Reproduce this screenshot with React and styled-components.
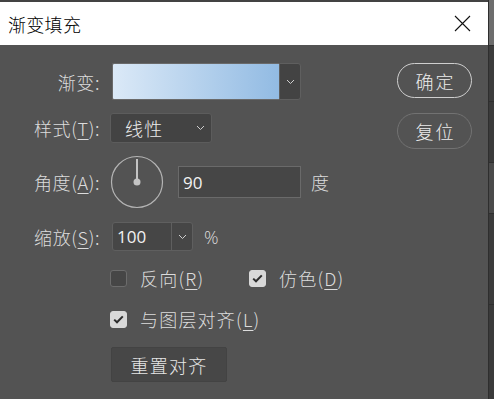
import React from "react";
import styled, { createGlobalStyle } from "styled-components";

const GlobalStyle = createGlobalStyle`
  html, body {
    margin: 0;
    padding: 0;
    background: #3b3b3b;
  }
  body {
    font-family: "Noto Sans CJK SC", "Noto Sans", sans-serif;
  }
`;

const Page = styled.div`
  display: flex;
  width: 494px;
  height: 399px;
  overflow: hidden;
`;

const Dialog = styled.div`
  width: 488px;
  display: flex;
  flex-direction: column;
  background: #535353;
  border-top: 2px solid #434343;
`;

const SideStrip = styled.div`
  flex: 1;
  display: flex;
  flex-direction: column;
  background: #3a3a3a;
  border-left: 1px solid #2e2e2e;
`;

const StripPart = styled.div`
  height: ${(p) => p.$h}px;
  background: ${(p) => p.$bg};
  border-bottom: 1px solid #2f2f2f;
`;

const TitleBar = styled.div`
  height: 43px;
  background: #fff;
  display: flex;
  align-items: center;
  justify-content: space-between;
  padding: 0 17px 0 8px;
`;

const Title = styled.span`
  font-size: 18px;
  font-weight: 300;
  color: #000;
  letter-spacing: 0.3px;
`;

const Body = styled.div`
  flex: 1;
  display: flex;
  padding-top: 18px;
`;

const Form = styled.div`
  display: flex;
  flex-direction: column;
  color: #dcdcdc;
  font-size: 18px;
  font-weight: 300;
  letter-spacing: 1.2px;
`;

const Row = styled.div`
  display: flex;
  align-items: center;
  height: ${(p) => p.$h}px;
  margin-top: ${(p) => p.$mt || 0}px;
  padding-left: ${(p) => p.$pl || 0}px;
`;

const Label = styled.div`
  width: 100px;
  text-align: right;
  margin-right: ${(p) => p.$gap ?? 12}px;
  white-space: nowrap;
  letter-spacing: 0.6px;
`;

const Key = styled.span`
  text-decoration: underline;
  text-underline-offset: 3px;
  text-decoration-thickness: 1px;
`;

const Swatch = styled.div`
  width: 167px;
  height: 37px;
  box-sizing: border-box;
  border: 1px solid #6a6a6a;
  border-right: none;
  border-radius: 2px 0 0 2px;
  background: linear-gradient(to right, #dbe9f7, #92bbe3);
`;

const DropButton = styled.div`
  width: 22px;
  height: 37px;
  box-sizing: border-box;
  display: flex;
  align-items: center;
  justify-content: center;
  background: #434343;
  border: 1px solid #5f5f5f;
  border-radius: 0 3px 3px 0;
`;

const Select = styled.div`
  width: 102px;
  height: 30px;
  box-sizing: border-box;
  display: flex;
  align-items: center;
  justify-content: space-between;
  padding: 0 6px 0 14px;
  background: #434343;
  border: 1px solid #5c5c5c;
  border-radius: 3px;
  margin-left: -2px;
  color: #ececec;
`;

const NumberInput = styled.div`
  width: 123px;
  height: 32px;
  box-sizing: border-box;
  display: flex;
  align-items: center;
  padding-left: 4px;
  background: #464646;
  border: 1px solid #6a6a6a;
  font-family: "Open Sans", "Noto Sans", sans-serif;
  font-size: 17px;
  font-weight: 400;
  letter-spacing: 0;
  color: #f2f2f2;
  margin-left: 14px;
`;

const Unit = styled.span`
  margin-left: ${(p) => p.$ml}px;
  font-family: ${(p) => (p.$latin ? `"Open Sans", sans-serif` : "inherit")};
`;

const Combo = styled.div`
  width: 81px;
  height: 29px;
  box-sizing: border-box;
  display: flex;
  background: #464646;
  border: 1px solid #5f5f5f;
  border-radius: 3px;
`;

const ComboText = styled.div`
  width: 59px;
  display: flex;
  align-items: center;
  padding-left: 4px;
  box-sizing: border-box;
  border-right: 1px solid #5f5f5f;
  font-family: "Open Sans", "Noto Sans", sans-serif;
  font-size: 17px;
  font-weight: 400;
  letter-spacing: 0;
  color: #f2f2f2;
`;

const ComboArrow = styled.div`
  flex: 1;
  display: flex;
  align-items: center;
  justify-content: center;
`;

const CheckItem = styled.label`
  display: flex;
  align-items: center;
  width: ${(p) => p.$w || "auto"};
`;

const Box = styled.span`
  width: 17px;
  height: 17px;
  box-sizing: border-box;
  border-radius: 3px;
  display: flex;
  align-items: center;
  justify-content: center;
  background: ${(p) => (p.$checked ? "#d9d9d9" : "#464646")};
  border: 1px solid ${(p) => (p.$checked ? "#d9d9d9" : "#6c6c6c")};
  margin-right: 13px;
`;

const Button = styled.div`
  width: 116px;
  height: 35px;
  box-sizing: border-box;
  display: flex;
  align-items: center;
  justify-content: center;
  background: #474747;
  border: 1px solid #434343;
  border-radius: 2px;
  color: #e6e6e6;
`;

const Side = styled.div`
  margin-left: auto;
  padding-right: 16px;
  display: flex;
  flex-direction: column;
  gap: 15px;
`;

const PillButton = styled.div`
  width: 75px;
  height: ${(p) => p.$h}px;
  box-sizing: border-box;
  display: flex;
  align-items: center;
  justify-content: center;
  border-radius: 18px;
  border: 1px solid ${(p) => (p.$primary ? "#cfcfcf" : "#727272")};
  color: #ececec;
  font-size: 18px;
  font-weight: 300;
  letter-spacing: 2px;
  padding-left: 2px;
`;

const Chevron = () => (
  <svg width="9" height="6" viewBox="0 0 9 6">
    <path d="M1 1 L4.5 4.5 L8 1" fill="none" stroke="#cfcfcf" strokeWidth="1" />
  </svg>
);

const Check = () => (
  <svg width="11" height="9" viewBox="0 0 11 9">
    <path d="M1.2 4.6 L4 7.3 L9.8 1.4" fill="none" stroke="#2d2d2d" strokeWidth="2" />
  </svg>
);

const CloseIcon = () => (
  <svg width="17" height="17" viewBox="0 0 17 17">
    <path d="M1 1 L16 16 M16 1 L1 16" stroke="#111" strokeWidth="1.1" />
  </svg>
);

const AngleDial = () => (
  <svg width="54" height="54" viewBox="0 0 54 54">
    <circle cx="27" cy="27" r="25.5" fill="none" stroke="#b4b4b4" strokeWidth="1.2" />
    <line x1="27" y1="27" x2="27" y2="4" stroke="#c4c4c4" strokeWidth="2" />
    <circle cx="27" cy="27" r="3.5" fill="#c4c4c4" />
  </svg>
);

const App = () => {
  return (
    <Page>
      <GlobalStyle />
      <Dialog>
        <TitleBar>
          <Title>渐变填充</Title>
          <CloseIcon />
        </TitleBar>
        <Body>
          <Form>
            {/* gradient */}
            <Row $h={37}>
              <Label>渐变:</Label>
              <Swatch />
              <DropButton>
                <Chevron />
              </DropButton>
            </Row>

            {/* style */}
            <Row $h={30} $mt={13}>
              <Label>
                样式(<Key>T</Key>):
              </Label>
              <Select>
                线性
                <Chevron />
              </Select>
            </Row>

            {/* angle */}
            <Row $h={54} $mt={12}>
              <Label $gap={10}>
                角度(<Key>A</Key>):
              </Label>
              <AngleDial />
              <NumberInput>90</NumberInput>
              <Unit $ml={10}>度</Unit>
            </Row>

            {/* scale */}
            <Row $h={29} $mt={13}>
              <Label>
                缩放(<Key>S</Key>):
              </Label>
              <Combo>
                <ComboText>100</ComboText>
                <ComboArrow>
                  <Chevron />
                </ComboArrow>
              </Combo>
              <Unit $ml={11} $latin>
                %
              </Unit>
            </Row>

            {/* checkboxes */}
            <Row $h={18} $mt={18} $pl={110}>
              <CheckItem $w="139px">
                <Box />
                反向(<Key>R</Key>)
              </CheckItem>
              <CheckItem>
                <Box $checked>
                  <Check />
                </Box>
                仿色(<Key>D</Key>)
              </CheckItem>
            </Row>
            <Row $h={18} $mt={23} $pl={110}>
              <CheckItem>
                <Box $checked>
                  <Check />
                </Box>
                与图层对齐(<Key>L</Key>)
              </CheckItem>
            </Row>

            <Row $h={35} $mt={19} $pl={111}>
              <Button>重置对齐</Button>
            </Row>
          </Form>

          <Side>
            <PillButton $primary $h={35}>
              确定
            </PillButton>
            <PillButton $h={36}>复位</PillButton>
          </Side>
        </Body>
      </Dialog>
      <SideStrip>
        <StripPart $h={45} $bg="#6d6d6d" />
        <StripPart $h={55} $bg="#3c3c3c" />
        <StripPart $h={60} $bg="#3a3a3a" />
        <StripPart $h={50} $bg="#4a4a4a" />
        <StripPart $h={90} $bg="#3b3b3b" />
      </SideStrip>
    </Page>
  );
};

export default App;
